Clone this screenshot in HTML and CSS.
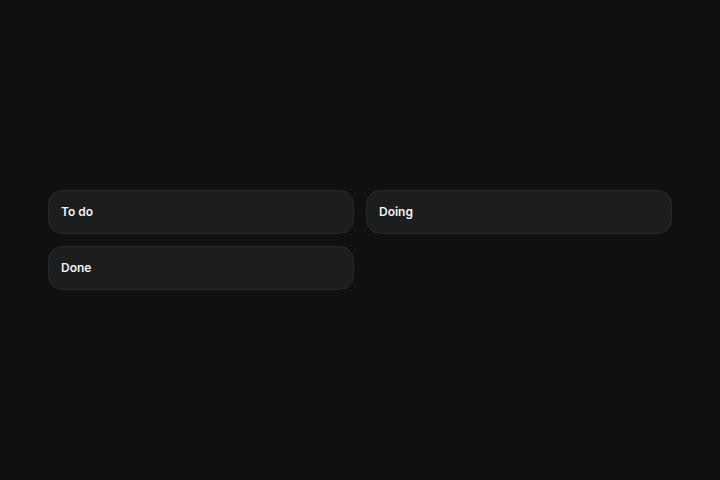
FILE: index.html
```html
<!DOCTYPE html>
<html>
<head>
<meta charset="utf-8">
<link rel="stylesheet" href="styles.css">
</head>
<body>
<main class="board">
  <div class="column"><span class="title">To do</span></div>
  <div class="column"><span class="title">Doing</span></div>
  <div class="column"><span class="title">Done</span></div>
</main>
</body>
</html>
```
FILE: styles.css
```css
html, body {
  margin: 0;
  height: 100%;
  background: #0f1012;
}
body {
  display: flex;
  align-items: center;
  justify-content: center;
  font-family: Inter, "Liberation Sans", sans-serif;
}
.board {
  width: 624px;
  display: grid;
  grid-template-columns: 1fr 1fr;
  gap: 12px;
}
.column {
  height: 44px;
  box-sizing: border-box;
  background: #1c1d1f;
  border: 1px solid #27282b;
  border-radius: 14px;
  padding: 0 12px 1px;
  display: flex;
  align-items: center;
}
.title {
  color: #f2f2f3;
  font-size: 12px;
  font-weight: 600;
}
```
